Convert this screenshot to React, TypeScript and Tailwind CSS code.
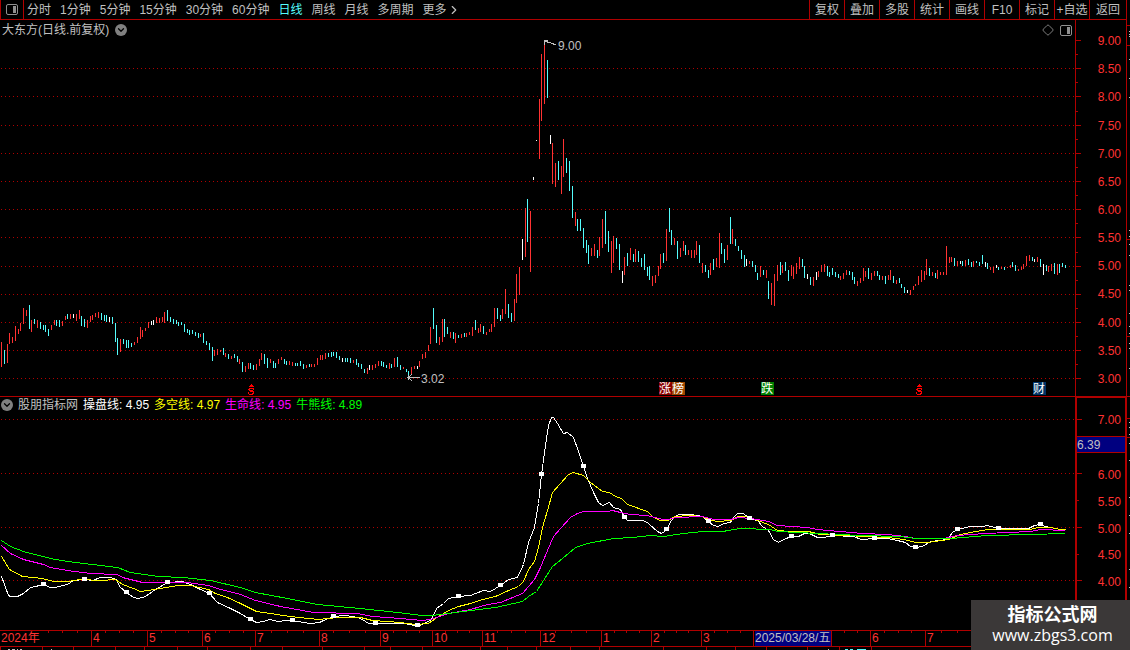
import { ChevronDown, ChevronRight, Diamond } from "lucide-react";

const periods = ["分时", "1分钟", "5分钟", "15分钟", "30分钟", "60分钟", "日线", "周线", "月线", "多周期"];
const tools = ["复权", "叠加", "多股", "统计", "画线", "F10", "标记", "+自选"];

const prices = ["9.00", "8.50", "8.00", "7.50", "7.00", "6.50", "6.00", "5.50", "5.00", "4.50", "4.00", "3.50", "3.00"];
const priceRows = [40, 68, 96, 125, 153, 181, 209, 237, 266, 294, 322, 350, 378];
const indicatorRows = [419, 473, 527, 580];

const legend = [
  { name: "操盘线", value: "4.95", color: "text-white" },
  { name: "多空线", value: "4.97", color: "text-[#ffff00]" },
  { name: "生命线", value: "4.95", color: "text-[#ff00ff]" },
  { name: "牛熊线", value: "4.89", color: "text-[#00ff00]" },
];

const months = [
  { label: "2024年", span: 91 },
  { label: "4", span: 56 },
  { label: "5", span: 55 },
  { label: "6", span: 53 },
  { label: "7", span: 64 },
  { label: "8", span: 61 },
  { label: "9", span: 52 },
  { label: "10", span: 50 },
  { label: "11", span: 58 },
  { label: "12", span: 61 },
  { label: "1", span: 50 },
  { label: "2", span: 50 },
  { label: "3", span: 52 },
  { label: "2025/03/28/五", span: 117, active: true },
  { label: "6", span: 55 },
  { label: "7", span: 205 },
];

const totalSpan = months.reduce((sum, m) => sum + m.span, 0);

const weekTicks = [
  48, 62, 77, 105, 119, 133, 161, 175, 188, 215, 229, 243, 271, 287, 303, 333, 349, 365, 393, 406, 419, 445, 457, 469,
  497, 511, 525, 555, 571, 586, 614, 626, 639, 664, 676, 688, 714, 727, 740, 844, 857, 884, 898, 911, 941, 957,
];

const footTicks = [
  0, 42, 73, 115, 144, 177, 207, 250, 282, 322, 364, 390, 422, 480, 507, 536, 570, 599, 663, 706, 735, 766, 807, 839,
  871,
];

// x, high, low, kind (r = up, c = down, w = flat)
const barData = `
1 342 367 r,4 350 364 c,7 344 363 r,9 333 344 r,12 337 343 r,15 326 341 r,18 329 334 r,20 323 331 r,23 308 324 r,26 310 316 r,
29 305 329 c,31 320 332 r,34 319 324 c,37 320 328 r,40 322 329 c,43 325 330 c,45 325 332 c,48 329 336 c,51 325 330 r,54 320 325 r,
56 320 326 c,59 320 327 c,62 321 326 r,65 316 320 r,67 314 319 c,70 314 319 r,73 314 318 w,76 314 321 r,79 310 319 r,81 316 326 c,
84 319 327 c,87 320 328 r,90 316 322 r,92 315 320 r,95 313 317 r,98 312 318 r,101 313 320 c,104 315 321 c,106 315 322 c,109 317 322 w,
112 317 324 c,115 323 342 c,117 338 355 c,120 339 352 r,123 339 344 c,126 340 348 c,128 340 348 c,131 343 347 c,134 342 345 r,137 337 343 r,
140 327 339 r,142 330 337 r,145 328 331 r,148 322 328 r,151 321 325 w,153 320 325 w,156 317 323 r,159 318 323 r,162 317 322 r,164 312 323 r,
167 310 321 c,170 317 322 c,173 319 324 c,176 320 324 c,178 322 326 c,181 322 325 c,184 324 332 c,187 329 333 c,189 330 335 c,192 330 334 c,
195 332 336 c,198 333 338 c,200 334 337 r,203 333 343 c,206 341 345 c,209 343 350 c,212 347 361 c,214 350 356 r,217 349 355 r,220 350 352 r,
223 348 355 c,225 353 357 r,228 354 359 c,231 356 359 r,234 354 358 c,237 356 362 c,239 359 364 r,242 362 372 c,245 366 372 r,248 363 369 r,
250 363 369 c,253 365 370 c,256 364 370 r,259 359 366 r,261 353 360 r,264 354 364 c,267 358 368 c,270 359 363 r,273 361 368 c,275 363 368 c,
278 359 364 r,281 357 360 r,284 359 364 c,286 361 365 c,289 361 365 r,292 362 366 r,295 363 366 c,297 363 366 c,300 361 366 c,303 364 369 c,
306 365 368 r,309 364 367 c,311 364 367 r,314 364 367 r,317 358 365 r,320 355 360 r,322 355 360 r,325 353 359 r,328 353 357 c,331 352 357 c,
333 352 356 c,336 352 358 c,339 356 360 c,342 358 362 w,345 358 362 c,347 358 362 c,350 358 363 c,353 360 363 r,356 359 365 c,358 363 367 c,
361 364 369 c,364 369 373 c,367 368 374 r,369 365 370 w,372 365 370 r,375 364 368 r,378 361 366 r,381 361 366 c,383 362 367 c,386 365 368 c,
389 363 369 r,391 364 368 c,394 358 367 r,397 357 367 c,400 365 370 c,403 367 369 r,406 369 372 c,408 371 378 c,411 367 375 r,414 366 369 r,
417 366 369 w,419 361 367 r,422 354 359 r,425 352 358 r,428 345 351 r,430 327 344 r,433 308 329 c,436 325 343 c,439 337 345 r,442 319 342 r,
444 319 337 c,447 327 334 c,450 332 338 r,453 332 339 c,455 333 343 r,458 335 338 c,461 334 338 r,464 333 337 c,466 333 337 r,469 332 335 r,
472 327 336 r,475 320 330 c,478 328 333 r,480 324 332 r,483 326 334 c,486 332 335 r,489 329 332 r,491 324 332 r,494 308 327 r,497 308 319 c,
500 315 321 c,502 309 319 r,505 289 314 r,508 304 318 c,511 313 322 c,514 299 321 r,516 274 303 r,519 267 295 r,522 239 260 w,525 208 257 r,
527 199 242 c,530 211 272 r,533 177 180 w,536 140 141 w,539 99 159 r,541 54 121 r,544 43 104 r,547 60 98 c,550 135 144 w,552 143 184 r,
555 163 187 r,558 161 180 c,561 166 194 r,563 139 177 r,566 158 173 c,569 161 191 c,572 186 218 c,575 212 226 r,577 219 231 c,580 219 231 c,
583 228 248 c,586 240 253 c,588 245 264 c,591 248 256 r,594 244 256 r,597 250 258 c,599 237 256 r,602 219 248 r,605 211 244 c,608 231 252 c,
611 241 273 r,613 236 263 r,616 238 249 c,619 244 270 c,622 271 283 w,624 257 275 r,627 253 266 c,630 248 260 r,633 254 262 c,635 249 262 r,
638 251 262 c,641 258 267 c,644 254 270 c,647 267 276 c,649 266 280 c,652 276 286 r,655 275 283 r,658 266 276 r,660 254 269 r,663 253 263 c,
666 229 261 r,669 208 232 c,671 230 245 c,674 238 245 r,677 241 259 c,680 248 257 r,683 241 251 r,685 245 255 c,688 250 255 r,691 250 258 r,
694 250 258 r,696 241 255 r,699 245 263 c,702 263 273 r,705 265 272 c,708 270 278 c,710 263 275 r,713 259 270 c,716 258 267 r,719 233 268 r,
721 243 254 c,724 249 263 c,727 245 260 r,730 217 244 c,732 229 244 r,735 239 246 c,738 246 251 c,741 250 259 c,744 255 267 c,746 259 266 w,
749 261 264 r,752 261 267 c,755 265 272 c,757 273 280 c,760 266 277 r,763 270 275 c,766 270 278 r,768 281 299 c,771 283 305 r,774 274 306 r,
777 265 281 r,780 262 275 c,782 265 273 r,785 262 271 c,788 270 281 c,791 265 276 r,793 267 279 r,796 263 274 r,799 257 269 r,802 259 267 c,
804 266 278 c,807 274 279 w,810 277 285 c,813 277 286 r,816 272 280 w,818 271 277 r,821 265 272 r,824 264 272 r,827 266 276 c,829 272 277 c,
832 268 275 c,835 272 277 c,838 274 278 c,840 276 280 r,843 273 279 r,846 270 275 r,849 271 275 c,852 272 280 c,854 277 284 c,857 281 286 r,
860 278 283 r,863 268 281 r,865 271 277 r,868 268 279 c,871 273 280 r,874 271 276 r,877 271 276 c,879 275 280 c,882 276 280 r,885 276 284 c,
888 275 280 r,890 270 280 r,893 276 283 c,896 280 284 r,899 278 283 c,901 284 288 c,904 287 293 c,907 290 293 w,910 290 295 r,913 286 290 r,
915 284 286 r,918 276 285 r,921 270 282 r,924 271 280 r,926 259 275 r,929 268 276 c,932 272 276 r,935 273 278 c,937 270 279 r,940 272 275 r,
943 272 275 r,946 246 275 r,949 257 263 r,951 257 262 r,954 258 266 c,957 261 266 r,960 261 264 w,962 261 266 c,965 260 266 r,968 259 265 c,
971 262 267 c,973 261 267 r,976 261 263 c,979 262 266 c,982 255 264 c,985 262 267 w,987 263 269 c,990 267 270 r,993 267 273 r,996 265 268 w,
998 267 270 c,1001 267 269 r,1004 267 270 c,1007 267 268 r,1010 265 268 r,1012 262 267 c,1015 265 271 c,1018 269 271 r,1021 267 270 r,1023 264 269 r,
1026 256 266 r,1029 255 261 r,1032 257 261 c,1034 259 262 w,1037 257 262 r,1040 259 267 c,1043 264 275 w,1046 265 271 c,1048 266 272 r,1051 264 271 r,
1054 263 274 c,1057 264 275 r,1059 264 273 c,1062 263 267 c,1065 265 268 c`;

const barColor: Record<string, string> = { r: "#ff3232", c: "#54fcfc", w: "#ffffff" };

const bars = barData.split(",").map((row) => {
  const [x, high, low, kind] = row.trim().split(" ");
  return { x: Number(x), high: Number(high), low: Number(low), color: barColor[kind] };
});

const lines = [
  {
    color: "#ffffff",
    points:
      "1,576 8,595 10,596 17,596 23,593 30,587 35,586 43,584 50,587 55,587 62,585 67,584 73,580 84,579 92,580 100,577 110,577 116,579 119,586 126,592 133,597 138,598 145,596 155,589 167,582 182,581 190,584 200,589 209,593 217,602 230,608 238,612 250,619 256,622 263,621 269,619 278,621 285,620 292,620 303,622 310,623 319,622 323,620 333,616 345,615 357,617 362,619 368,623 375,623 392,623 403,623 410,624 417,626 423,623 430,620 433,615 436,608 443,603 448,598 458,596 470,595 483,590 490,591 500,585 508,579 517,577 523,564 528,542 534,527 538,503 541,474 545,445 548,425 551,417 553,417 557,423 563,433 567,432 573,437 577,448 583,466 587,478 593,492 598,502 602,505 609,502 613,507 620,509 624,517 627,520 643,520 648,523 657,531 661,533 667,529 669,523 673,517 678,514 690,514 702,516 708,521 713,525 718,526 723,523 730,522 733,517 737,513 743,513 749,518 757,520 762,526 768,530 773,539 778,542 783,539 791,536 798,536 804,533 809,533 817,537 823,537 832,535 853,536 861,539 874,538 887,538 897,540 905,542 910,546 915,547 922,546 930,541 947,539 952,532 957,529 970,526 982,526 987,525 998,528 1013,528 1028,528 1034,525 1040,524 1045,526 1055,528 1065,530",
  },
  {
    color: "#ffff00",
    points:
      "1,556 9,569 22,576 33,577 42,578 53,581 67,581 80,579 100,580 115,579 122,584 133,588 140,591 148,590 160,588 177,585 190,585 208,589 215,593 227,597 240,603 256,611 263,612 290,616 308,618 318,619 337,617 360,617 372,620 400,622 415,624 428,623 435,618 448,610 458,606 470,603 482,599 495,596 508,590 518,586 523,581 528,569 534,561 538,547 542,527 547,510 552,492 560,483 568,474 573,472 583,475 590,482 602,491 609,492 615,496 621,498 627,504 647,511 653,517 660,520 667,520 675,516 688,515 702,516 708,519 717,521 730,520 738,516 748,516 757,520 768,524 777,530 790,531 808,531 820,534 847,535 863,536 887,537 903,539 916,542 927,542 948,539 960,534 970,532 987,529 1030,529 1037,527 1050,527 1060,529 1065,529",
  },
  {
    color: "#ff00ff",
    points:
      "1,545 10,553 23,559 43,564 50,567 67,570 90,573 117,574 122,577 142,582 187,582 208,585 217,588 240,594 255,600 280,606 313,612 357,613 372,616 400,618 422,620 430,619 448,613 470,609 487,604 500,602 522,593 528,586 534,579 540,567 547,550 553,536 560,528 570,517 577,513 583,511 607,511 612,510 620,512 630,514 647,515 662,519 668,519 675,517 702,516 713,519 730,519 738,517 750,518 757,519 768,521 777,525 807,527 817,529 862,533 887,534 905,536 915,538 943,538 957,535 985,533 1030,531 1040,529 1065,530",
  },
  {
    color: "#00ff00",
    points:
      "1,540 10,546 23,551 50,558 67,561 117,567 130,572 158,576 183,577 210,580 240,587 255,592 287,598 317,604 360,608 397,612 422,615 432,615 448,613 470,610 495,607 522,601 528,596 536,591 543,580 552,566 562,558 575,547 587,543 613,538 632,537 650,535 663,536 683,533 703,531 722,531 740,528 770,529 777,531 817,533 860,535 900,536 915,538 950,538 987,535 1030,534 1065,533",
  },
];

const markers = [
  [43, 584], [84, 579], [126, 592], [167, 582], [209, 593], [250, 619], [292, 620], [333, 616], [375, 623],
  [417, 625], [458, 596], [500, 585], [541, 474], [583, 466], [624, 517], [666, 529], [708, 521], [749, 518],
  [791, 536], [832, 535], [874, 538], [915, 547], [957, 529], [998, 528], [1040, 524],
];

function GridLines({ rows }: { rows: number[] }) {
  return (
    <g stroke="#b00000" strokeDasharray="1 3">
      {rows.map((y) => (
        <line key={y} x1="1" x2="1075" y1={y + 0.5} y2={y + 0.5} />
      ))}
    </g>
  );
}

function AxisTicks({ rows, top, height }: { rows: number[]; top: number; height: number }) {
  return (
    <svg
      className="col-start-1 row-start-1 h-full w-2"
      viewBox={`0 ${top} 8 ${height}`}
      preserveAspectRatio="none"
      shapeRendering="crispEdges"
      fill="#b00000"
      aria-hidden="true"
    >
      {rows.map((y, i) => (
        <g key={y}>
          <rect x="0" y={y} width="5" height="1" />
          {i < rows.length - 1 && <rect x="0" y={Math.round((y + rows[i + 1]) / 2)} width="2" height="1" />}
        </g>
      ))}
    </svg>
  );
}

function PanelIcon() {
  return (
    <svg width="12" height="11" viewBox="0 0 12 11" aria-hidden="true">
      <rect x="0.5" y="0.5" width="11" height="10" rx="1.5" fill="none" stroke="#909090" />
      <rect x="7" y="2" width="3" height="7" fill="#909090" />
    </svg>
  );
}

function RoundToggle({ label }: { label: string }) {
  return (
    <button type="button" aria-label={label} className="flex size-3 items-center justify-center rounded-full bg-[#808080] text-black">
      <ChevronDown size={10} strokeWidth={3} />
    </button>
  );
}

// red dollar mark for ex-dividend days
function DividendMark({ x }: { x: number }) {
  return (
    <path
      transform={`translate(${x} 384)`}
      fill="#ff0000"
      d="M3 0h1v1h1v1h1v1h-5v-1h1v-1h1zM1 4h5v1h-5zM0 5h2v1h-2zM5 5h1v1h-1zM1 6h4v1h-4zM2 7h4v1h-4zM5 8h1v1h-1zM0 8h1v1h-1zM4 9h2v1h-2zM0 9h1v1h-1zM1 10h4v1h-4z"
    />
  );
}

// sliver of the neighbouring pane at the right edge
function SideStrip({ top, height, reds, greys }: { top: number; height: number; reds: number[]; greys: number[] }) {
  return (
    <svg
      className="h-full w-[3px] shrink-0"
      viewBox={`0 ${top} 3 ${height}`}
      preserveAspectRatio="none"
      shapeRendering="crispEdges"
      aria-hidden="true"
    >
      {reds.map((y) => (
        <rect key={y} x="0" y={y} width="3" height="1" fill="#b00000" />
      ))}
      {greys.map((y) => (
        <rect key={y} x="2" y={y} width="1" height="1" fill="#c0c0c0" />
      ))}
    </svg>
  );
}

export default function App() {
  return (
    <main className="relative flex h-screen flex-col overflow-hidden bg-black font-['Liberation_Sans','Noto_Sans_CJK_SC',sans-serif] text-xs leading-4 text-[#c0c0c0]">
      <header className="flex h-5 shrink-0 pr-[3px]">
        <nav className="flex flex-1 items-center gap-[9px] border-b border-l border-[#b00000] whitespace-nowrap">
          <button type="button" aria-label="侧栏" className="-mr-1.5 flex h-full w-[23px] items-center justify-center border-r border-[#b00000]">
            <PanelIcon />
          </button>
          {periods.map((p) => (
            <button key={p} type="button" className={p === "日线" ? "text-[#54fcfc]" : ""}>
              {p}
            </button>
          ))}
          <button type="button" className="flex items-center">
            更多
            <ChevronRight size={14} strokeWidth={2} />
          </button>
        </nav>
        <div className="flex border-r border-b border-[#b00000] whitespace-nowrap">
          {tools.map((t) => (
            <button key={t} type="button" className="w-[35px] border-l border-[#b00000]">
              {t}
            </button>
          ))}
          <button type="button" className="w-[37px] border-l border-[#b00000]">返回</button>
        </div>
      </header>

      <section className="flex min-h-0 flex-[376]">
        <div className="grid min-w-0 flex-1 grid-rows-[minmax(0,1fr)]">
          <svg
            className="col-start-1 row-start-1 h-full w-full"
            viewBox="0 20 1075 376"
            preserveAspectRatio="none"
            shapeRendering="crispEdges"
            role="img"
            aria-label="日线"
          >
            <GridLines rows={priceRows.slice(1)} />
            {bars.map((b) => (
              <rect key={b.x} x={b.x} y={b.high} width="1" height={b.low - b.high} fill={b.color} />
            ))}
            <g fill="none" stroke="#c0c0c0">
              <path d="M544.5 45v-5h3M545 41.5l5 1 6 2.5" />
              <path d="M408 377.5h12M412 374.5l-4 3 4 3M408.5 375v5" />
            </g>
            <g fill="#c0c0c0" fontSize="12">
              <text x="558" y="50">9.00</text>
              <text x="421" y="383">3.02</text>
            </g>
            <DividendMark x={248} />
            <DividendMark x={916} />
            <rect x="659" y="382" width="13" height="13" fill="#8b0000" />
            <rect x="672" y="382" width="13" height="13" fill="#a04800" />
            <rect x="761" y="382" width="13" height="13" fill="#008000" />
            <rect x="1033" y="382" width="13" height="13" fill="#003366" />
            <g fill="#ffffff" fontSize="12">
              <text x="659" y="393">涨</text>
              <text x="672" y="393">榜</text>
              <text x="761" y="393">跌</text>
              <text x="1033" y="393">财</text>
            </g>
          </svg>
          <div className="col-start-1 row-start-1 flex items-center gap-1.5 self-start pt-0.5 pr-[3px] pl-0.5">
            <h1>大东方(日线.前复权)</h1>
            <RoundToggle label="展开" />
            <Diamond className="ml-auto text-[#808080]" size={12} strokeWidth={2} />
            <PanelIcon />
          </div>
        </div>
        <div className="grid w-[52px] grid-rows-[minmax(0,1fr)] border-x border-[#b00000]">
          <AxisTicks rows={priceRows} top={20} height={376} />
          <div className="col-start-1 row-start-1 flex flex-col pt-[7px] pr-[5px] pb-[3px] text-right text-[#ff3232]">
            {prices.map((p) => (
              <span key={p} className="flex flex-1 items-center justify-end">{p}</span>
            ))}
          </div>
        </div>
        <SideStrip top={20} height={376} reds={[25, 45, 239, 336]} greys={[31, 34, 36, 59, 78, 97, 230, 236, 244, 255, 285, 290, 313, 326, 333, 343, 348, 368]} />
      </section>

      <section className="flex min-h-0 flex-[234]">
        <div className="grid min-w-0 flex-1 grid-rows-[minmax(0,1fr)] border-t border-[#b00000]">
          <svg
            className="col-start-1 row-start-1 h-full w-full"
            viewBox="0 397 1075 233"
            preserveAspectRatio="none"
            shapeRendering="crispEdges"
            role="img"
            aria-label="股朋指标网"
          >
            <GridLines rows={indicatorRows} />
            <g transform="translate(0.5 0.5)" fill="none">
              {lines.map((l) => (
                <polyline key={l.color} points={l.points} stroke={l.color} />
              ))}
            </g>
            {markers.map(([x, y]) => (
              <rect key={x} x={x - 2} y={y - 2} width="5" height="4" fill="#ffffff" />
            ))}
          </svg>
          <div className="col-start-1 row-start-1 flex items-center gap-[5px] self-start pl-px whitespace-nowrap">
            <RoundToggle label="指标" />
            <h2>股朋指标网</h2>
            {legend.map((l) => (
              <span key={l.name} className={l.color}>{l.name}: {l.value}</span>
            ))}
          </div>
        </div>
        <div className="grid w-[52px] grid-rows-[minmax(0,1fr)] border-x-2 border-t-2 border-[#b00000]">
          <AxisTicks rows={indicatorRows} top={398} height={232} />
          <div className="col-start-1 row-start-1 flex flex-col pt-[9px] pb-[35px] text-[#ff3232]">
            <span className="flex flex-1 items-center justify-end pr-1">7.00</span>
            <span className="flex-1 pt-0.5">
              <span className="block h-[17px] border-y border-[#b00000] bg-[#000080] text-[#c0c0c0]">6.39</span>
            </span>
            {["6.00", "5.50", "5.00", "4.50", "4.00"].map((p) => (
              <span key={p} className="flex flex-1 items-center justify-end pr-1">{p}</span>
            ))}
          </div>
        </div>
        <SideStrip top={396} height={234} reds={[396, 418, 437]} greys={[422, 427, 434, 443, 460, 497, 515, 533, 569, 587]} />
      </section>

      <footer className="shrink-0">
        <div className="grid h-[17px] border-y border-[#b00000]">
          <svg
            className="col-start-1 row-start-1 h-1 w-full"
            viewBox="0 0 1130 4"
            preserveAspectRatio="none"
            shapeRendering="crispEdges"
            fill="#b00000"
            aria-hidden="true"
          >
            {weekTicks.map((x) => (
              <rect key={x} x={x} y="0" width="1" height="2" />
            ))}
          </svg>
          <ol className="col-start-1 row-start-1 flex leading-[15px] whitespace-nowrap text-[#ff3232]">
            {months.map((m, i) => (
              <li
                key={i}
                className="shrink-0 border-l border-[#b00000] pl-px first:border-l-0"
                style={{ width: `${(m.span / totalSpan) * 100}%` }}
              >
                {m.active ? (
                  <span className="inline-block border-r border-[#b00000] bg-[#000080] pr-px text-[#c0c0c0]">{m.label}</span>
                ) : (
                  m.label
                )}
              </li>
            ))}
          </ol>
        </div>
        <svg
          className="block h-[3px] w-full"
          viewBox="0 0 1130 3"
          preserveAspectRatio="none"
          shapeRendering="crispEdges"
          aria-hidden="true"
        >
          {footTicks.map((x) => (
            <rect key={x} x={x} y="0" width="1" height="3" fill="#b00000" />
          ))}
          <path d="M8 2.5h2m2 0h3m2 0h1m2 0h2m29 0h1M828 2.5h1" stroke="#c0c0c0" />
          <path d="M845 2.5h3m2 0h3m4 0h9" stroke="#54fcfc" />
        </svg>
      </footer>

      <aside className="absolute right-0 bottom-0 flex h-[50px] w-[159px] flex-col items-center justify-center bg-[#3b3838] pr-0 pl-1 text-white">
        <strong className="text-lg leading-5">指标公式网</strong>
        <a href="#" className="font-['Open_Sans','Noto_Sans_CJK_SC',sans-serif] text-base leading-5">www.zbgs3.com</a>
      </aside>
    </main>
  );
}
